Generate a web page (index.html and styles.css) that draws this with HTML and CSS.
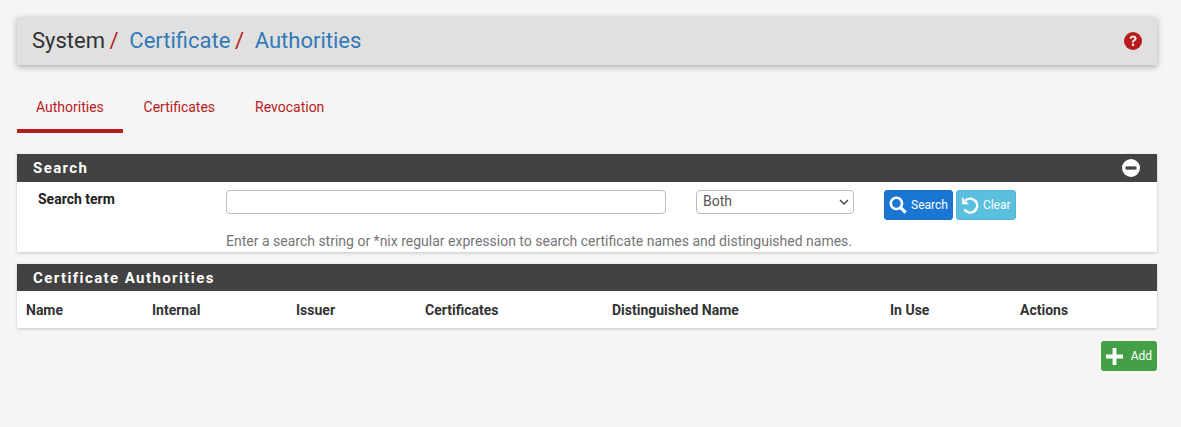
FILE: index.html
```html
<!DOCTYPE html>
<html lang="en">
<head>
  <meta charset="UTF-8">
  <title>System / Certificate / Authorities</title>
  <link rel="stylesheet" href="styles.css">
</head>
<body>
  <div class="page-header">
    <h1>
      <span>System</span><span class="sep">/</span>
      <a href="#">Certificate</a><span class="sep">/</span>
      <a href="#">Authorities</a>
    </h1>
    <svg class="help-icon" viewBox="0 0 18 18" width="18" height="18">
      <circle cx="9" cy="9" r="9" fill="#b71c1c"/>
      <path d="M5.6 6.8C5.8 4.8 7.2 3.6 9.2 3.6c2 0 3.4 1.2 3.4 2.9 0 1.3-.7 2-1.7 2.6-.7.4-.9.7-.9 1.4H7.9c0-1.5.4-2.2 1.4-2.8.7-.4 1-.7 1-1.3 0-.6-.5-1-1.1-1-.7 0-1.2.4-1.3 1.2z" fill="#f0e6e6"/>
      <rect x="7.9" y="11.6" width="2.2" height="2.4" fill="#f0e6e6"/>
    </svg>
  </div>

  <ul class="tabs">
    <li class="tab active"><a href="#">Authorities</a></li>
    <li class="tab"><a href="#">Certificates</a></li>
    <li class="tab"><a href="#">Revocation</a></li>
  </ul>

  <div class="panel search-panel">
    <div class="panel-heading">
      <h2>Search</h2>
      <svg class="collapse-icon" viewBox="0 0 18 18" width="18" height="18">
        <circle cx="9" cy="9" r="9" fill="#fff"/>
        <rect x="3.5" y="7.4" width="11" height="3.2" fill="#424242"/>
      </svg>
    </div>
    <div class="search-body">
      <label class="search-label" for="term">Search term</label>
      <div class="search-fields">
        <input class="term-input" type="text" id="term">
        <div class="select-wrap">
          <select class="where-select">
            <option>Both</option>
          </select>
          <svg class="select-arrow" viewBox="0 0 10 6" width="10" height="6" fill="none" stroke="#444" stroke-width="1.4">
            <path d="M1 1l4 4 4-4"/>
          </svg>
        </div>
        <div class="search-buttons">
          <button class="btn btn-blue" type="button">
            <svg viewBox="0 0 18 18" width="18" height="18" fill="none" stroke="#fff">
              <circle cx="7.4" cy="7.4" r="5.6" stroke-width="2.6"/>
              <path d="M11.6 11.6l5 5" stroke-width="3.2"/>
            </svg>
            Search
          </button>
          <button class="btn btn-cyan" type="button">
            <svg viewBox="0 0 19 19" width="19" height="19" fill="none" stroke="#fff">
              <path d="M4.6 4.4A7 7 0 1 1 3.4 13.4" stroke-width="2.4"/>
              <path d="M1 1.2v7h7z" fill="#fff" stroke="none"/>
            </svg>
            Clear
          </button>
        </div>
      </div>
      <p class="search-help">Enter a search string or *nix regular expression to search certificate names and distinguished names.</p>
    </div>
  </div>

  <div class="panel ca-panel">
    <div class="panel-heading">
      <h2>Certificate Authorities</h2>
    </div>
    <table class="ca-table">
      <thead>
        <tr>
          <th class="col-name">Name</th>
          <th class="col-internal">Internal</th>
          <th class="col-issuer">Issuer</th>
          <th class="col-certs">Certificates</th>
          <th class="col-dn">Distinguished Name</th>
          <th class="col-use">In Use</th>
          <th>Actions</th>
        </tr>
      </thead>
    </table>
  </div>

  <div class="actions">
    <button class="btn btn-green" type="button">
      <svg viewBox="0 0 17 17" width="17" height="17">
        <path d="M6.6 0h3.8v6.6H17v3.8h-6.6V17H6.6v-6.6H0V6.6h6.6z" fill="#fff"/>
      </svg>
      Add
    </button>
  </div>
</body>
</html>
```

FILE: styles.css
```css
body {
  background: #f5f5f5;
  font-family: Roboto, Arial, sans-serif;
  font-size: 14px;
  color: #212121;
  margin: 0;
  padding: 17px 24px 0 17px;
}
a { text-decoration: none; }

.page-header {
  display: flex;
  align-items: center;
  justify-content: space-between;
  height: 48px;
  padding: 0 15px;
  background: #e0e0e0;
  border-radius: 2px;
  box-shadow: 0 2px 6px rgba(0,0,0,0.3);
}
.page-header h1 {
  margin: 0 0 2px;
  font-size: 22px;
  font-weight: 400;
  color: #333;
  white-space: nowrap;
}
.page-header h1 a { color: #337ab7; }
.page-header .sep {
  color: #b71c1c;
  margin: 0 5.2px 0 4.6px;
}
.help-icon { flex: none; }

.tabs {
  display: flex;
  list-style: none;
  margin: 20px 0 0;
  padding: 0;
}
.tab a {
  display: block;
  height: 48px;
  line-height: 44px;
  padding: 0 20px;
  color: #b71c1c;
  font-size: 14px;
  box-sizing: border-box;
}
.tab.active { margin-right: 0.7px; }
.tab.active a {
  padding: 0 19px;
  border-bottom: 4px solid #b71c1c;
}

.panel {
  background: #fff;
  box-shadow: 0 1px 3px rgba(0,0,0,0.2);
}
.search-panel { margin-top: 21px; }
.ca-panel { margin-top: 12px; }
.ca-panel .panel-heading { height: 27px; }

.panel-heading {
  display: flex;
  align-items: center;
  justify-content: space-between;
  height: 28px;
  padding: 0 17px 0 16px;
  background: #424242;
}
.panel-heading h2 {
  margin: 0;
  color: #fff;
  font-size: 15px;
  font-weight: 700;
  letter-spacing: 1.4px;
}

.search-body {
  display: grid;
  grid-template-columns: 209px 1fr;
  padding-top: 8px;
  height: 62px;
}
.search-label {
  padding: 1px 0 0 21px;
  font-weight: 700;
  font-size: 14px;
  color: #212121;
}
.search-fields {
  display: flex;
  align-items: flex-start;
}
.term-input {
  width: 440px;
  height: 24px;
  box-sizing: border-box;
  border: 1px solid #bdbdbd;
  border-radius: 4px;
  background: #fff;
}
.select-wrap {
  position: relative;
  margin-left: 30px;
}
.select-arrow {
  position: absolute;
  top: 9px;
  right: 5px;
  pointer-events: none;
}
.where-select {
  display: block;
  width: 158px;
  height: 24px;
  padding: 0 2px 2px 6px;
  border: 1px solid #bdbdbd;
  border-radius: 4px;
  background: #fff;
  color: #555;
  font-family: inherit;
  font-size: 14px;
  appearance: none;
}
.search-buttons {
  display: flex;
  gap: 3px;
  margin-left: 30px;
}
.search-help {
  grid-column: 2;
  margin: 10px 0 0;
  color: #757575;
  font-size: 14px;
  white-space: nowrap;
}

.btn {
  display: inline-flex;
  align-items: center;
  height: 30px;
  padding: 0 4px;
  gap: 4px;
  border: 1px solid transparent;
  border-radius: 3px;
  color: #fff;
  font-family: inherit;
  font-size: 12px;
  box-sizing: border-box;
}
.btn-blue { background: #1976d2; border-color: #1a6fc4; }
.btn-cyan { background: #5bc0de; border-color: #53b6d4; gap: 3px; }
.btn-green { background: #43a047; gap: 8px; }

.ca-table {
  width: 100%;
  border-collapse: collapse;
}
.ca-table th {
  height: 37px;
  padding: 0 0 0 9px;
  text-align: left;
  font-size: 14px;
  font-weight: 700;
  color: #333;
}
.col-name { width: 117px; }
.col-internal { width: 135px; }
.col-issuer { width: 120px; }
.col-certs { width: 178px; }
.col-dn { width: 269px; }
.col-use { width: 121px; }

.actions {
  display: flex;
  justify-content: flex-end;
  margin-top: 13px;
}
```
